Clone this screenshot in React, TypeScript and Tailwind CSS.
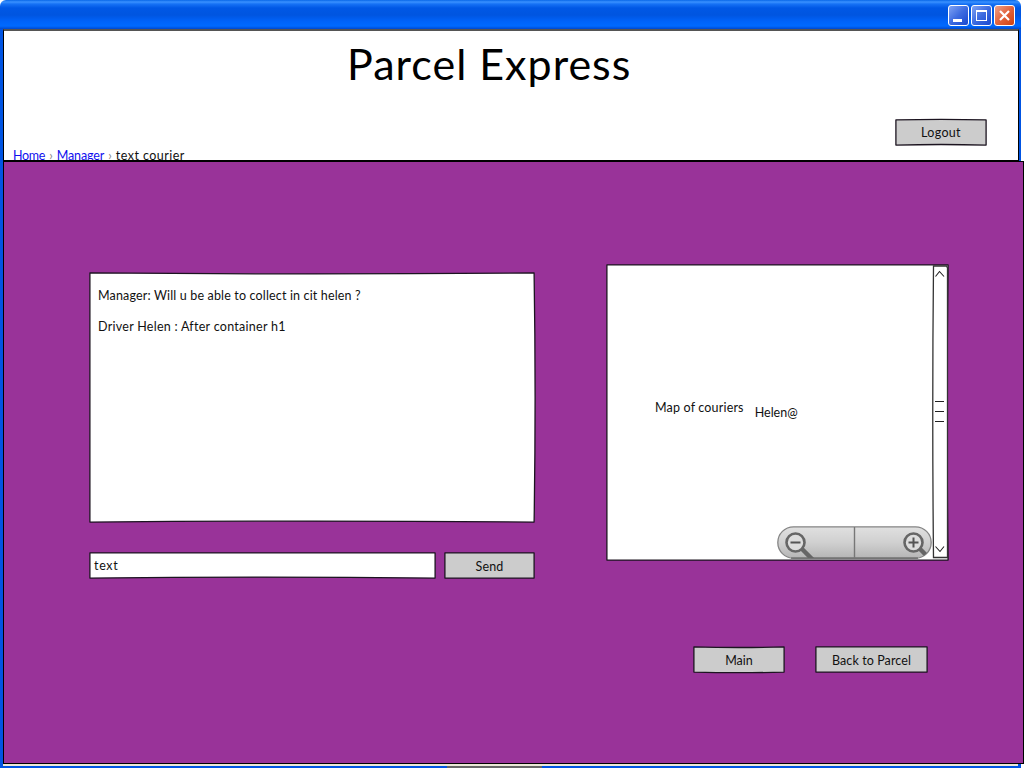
import type { ReactNode } from "react";

type OutlineProps = {
  w: number;
  h: number;
  fill: string;
  top?: number;
  right?: number;
  bottom?: number;
  left?: number;
};

// Hand-drawn rectangle whose sides bow by a pixel or two (positive = outwards).
function Outline({ w, h, fill, top = 0, right = 0, bottom = 0, left = 0 }: OutlineProps) {
  const r = w - 0.9;
  const b = h - 0.9;
  const d = `M0.9 0.9 Q${w / 2} ${0.9 - top * 2} ${r} 0.9 Q${r + right * 2} ${h / 2} ${r} ${b} Q${w / 2} ${b + bottom * 2} 0.9 ${b} Q${0.9 - left * 2} ${h / 2} 0.9 0.9Z`;
  return (
    <svg className="pointer-events-none absolute inset-0 overflow-visible" width={w} height={h} aria-hidden="true">
      <path d={d} fill={fill} stroke="#1c1420" strokeWidth="1.3" strokeLinejoin="round" />
    </svg>
  );
}

function SketchButton({ w, bow = 0, children }: { w: number; bow?: number; children: ReactNode }) {
  return (
    <button className="relative flex h-[27px] items-center justify-center pt-px" style={{ width: w }}>
      <Outline w={w} h={27} fill="#cccccc" top={bow} bottom={-bow} />
      <span className="relative whitespace-nowrap">{children}</span>
    </button>
  );
}

function WindowButtons() {
  return (
    <svg width="68" height="22" viewBox="0 0 68 22" aria-hidden="true">
      <defs>
        <linearGradient id="blueBtn" x1="0" y1="0" x2="1" y2="1">
          <stop offset="0" stopColor="#83a6f5" />
          <stop offset="0.5" stopColor="#3d6be0" />
          <stop offset="1" stopColor="#1746cf" />
        </linearGradient>
        <linearGradient id="redBtn" x1="0" y1="0" x2="1" y2="1">
          <stop offset="0" stopColor="#f0a48c" />
          <stop offset="0.5" stopColor="#e2633d" />
          <stop offset="1" stopColor="#cf3f0c" />
        </linearGradient>
      </defs>
      <rect x="0.5" y="0.5" width="20" height="20" rx="2.5" fill="url(#blueBtn)" stroke="#fff" />
      <rect x="5" y="14" width="9" height="3" fill="#fff" />
      <rect x="23.5" y="0.5" width="20" height="20" rx="2.5" fill="url(#blueBtn)" stroke="#fff" />
      <path d="M28 5h11v11H28z M29 7v8h9V7z" fill="#fff" fillRule="evenodd" />
      <rect x="46.5" y="0.5" width="20" height="20" rx="2.5" fill="url(#redBtn)" stroke="#fff" />
      <path d="M52 6l9 9M61 6l-9 9" stroke="#fff" strokeWidth="2.2" />
    </svg>
  );
}

function Magnifier({ cx, cy, plus = false }: { cx: number; cy: number; plus?: boolean }) {
  return (
    <g transform={`translate(${cx} ${cy})`} fill="none" stroke="#666">
      <path d="M6.5 6.5L17 17" strokeWidth="4.4" />
      <circle r="9" fill="#ddd" strokeWidth="2.6" />
      <path d="M-5 0H5" stroke="#555" strokeWidth="2" />
      {plus && <path d="M0 -5V5" stroke="#555" strokeWidth="2" />}
    </g>
  );
}

function ZoomControl() {
  return (
    <svg width="155" height="34" viewBox="0 0 155 34" aria-hidden="true">
      <defs>
        <linearGradient id="zoomFill" x1="0" y1="0" x2="0" y2="1">
          <stop offset="0" stopColor="#e0e0e0" />
          <stop offset="0.5" stopColor="#d0d0d0" />
          <stop offset="1" stopColor="#b5b5b5" />
        </linearGradient>
        <clipPath id="zoomClip">
          <rect x="1" y="1" width="153" height="31" rx="15.5" />
        </clipPath>
      </defs>
      <rect x="0.8" y="0.8" width="153.4" height="31.4" rx="15.7" fill="url(#zoomFill)" stroke="#858585" strokeWidth="1.3" />
      <path d="M14 32.2H141" stroke="#666" strokeWidth="1.2" />
      <path d="M77.5 1V32" stroke="#777" strokeWidth="1.4" />
      <g clipPath="url(#zoomClip)">
        <Magnifier cx={18.5} cy={16.5} />
        <Magnifier cx={136.5} cy={16.5} plus />
      </g>
    </svg>
  );
}

function ScrollBar() {
  return (
    <svg width="17" height="294" viewBox="0 0 17 294" aria-hidden="true">
      <path d="M1.5 1H14.5L15.500 3Q15.200 147 15.500 292.500H1.500Q0 147 1.500 1Z" fill="#fff" stroke="#333" strokeWidth="1.3" />
      <path d="M3.500 11.500L7.500 6.500L12 11.500M3.500 281.500L8 286.500L12 281.500" fill="none" stroke="#222" strokeWidth="1.1" />
      <path d="M3 136.500H12M3 146.500H12M3 156.500H12" stroke="#222" strokeWidth="1.2" />
    </svg>
  );
}

export default function App() {
  return (
    <div className="flex h-[768px] w-[1024px] flex-col overflow-hidden bg-white font-['Comic_Sans_MS','Lato',sans-serif] text-[12.500px] leading-[15.500px] text-[#111]">
      <div className="flex h-[29px] w-[1021px] shrink-0 justify-end rounded-t-[6px] bg-[linear-gradient(180deg,#0867e8_0px,#3a91ff_2px,#1672f5_4px,#0058e5_8px,#0055e0_15px,#0062f8_21px,#006aff_26px,#0048cf_29px)] pt-[5px] pr-[5px]">
        <WindowButtons />
      </div>
      <div className="flex min-h-0 flex-1 bg-[linear-gradient(90deg,#0054e3_1021px,white_1021px)] pl-[3px]">
        <div className="flex w-[1021px] flex-col">
          <header className="flex h-[132px] w-[1016px] flex-col overflow-hidden border-t-2 border-r border-b border-l border-t-[#555] border-r-black border-b-black border-l-black bg-white">
            <h1 className="h-[88px] shrink-0 pt-[8px] pl-[343px] text-[43px] leading-[50px] tracking-[1px] whitespace-nowrap text-black">Parcel Express</h1>
            <div className="flex h-[29px] shrink-0 justify-end pr-[31px]">
              <SketchButton w={92} bow={0.6}>
                <span className="tracking-[0.300px]">Logout</span>
              </SketchButton>
            </div>
            <nav className="flex h-[15px] shrink-0 gap-[4px] pl-[9px] whitespace-nowrap">
              <a className="tracking-[-0.300px] text-[#1010ee] underline">Home</a>
              <span className="text-[#888]">›</span>
              <a className="tracking-[-0.100px] text-[#1010ee] underline">Manager</a>
              <span className="text-[#888]">›</span>
              <span className="tracking-[0.450px]">text courier</span>
            </nav>
          </header>
          <main className="flex h-[603px] shrink-0 flex-col border border-black bg-[#993399]">
            <div className="flex h-[484px] pl-[85px]">
              <section className="flex w-[446px] flex-col pt-[110px]">
                <div className="relative h-[251px] w-[446px]">
                  <Outline w={446} h={251} fill="#fff" top={-1} right={1} bottom={-1} />
                  <div className="relative flex flex-col gap-[15.500px] pt-[16px] pl-[9px] whitespace-nowrap">
                    <p className="tracking-[0.160px]">Manager: Will u be able to collect in cit helen ?</p>
                    <p className="tracking-[0.270px]">Driver Helen : After container h1</p>
                  </div>
                </div>
                <div className="mt-[29px] flex gap-[8px]">
                  <div className="relative h-[27px] w-[347px]">
                    <Outline w={347} h={27} fill="#fff" bottom={-1} />
                    <span className="relative block pt-[6px] pl-[5px] tracking-[0.700px]">text</span>
                  </div>
                  <SketchButton w={91}>
                    <span className="block pt-px tracking-[0.200px]">Send</span>
                  </SketchButton>
                </div>
              </section>
              <section className="ml-[71px] pt-[102px]">
                <div className="relative flex h-[297px] w-[343px]">
                  <Outline w={343} h={297} fill="#fff" right={-1} />
                  <div className="relative flex w-[327px] flex-col">
                    <div className="flex h-[262px] gap-[11px] pt-[136px] pl-[49px] whitespace-nowrap">
                      <span className="tracking-[0.170px]">Map of couriers</span>
                      <span className="pt-[5px] tracking-normal">Helen@</span>
                    </div>
                    <div className="pl-[171px]">
                      <ZoomControl />
                    </div>
                  </div>
                  <div className="relative pt-px">
                    <ScrollBar />
                  </div>
                </div>
              </section>
            </div>
            <div className="flex gap-[30px] pl-[689px]">
              <SketchButton w={92} bow={-0.6}>
                <span className="block pt-px">Main</span>
              </SketchButton>
              <SketchButton w={113}>
                <span className="block pt-px tracking-[0.100px]">Back to Parcel</span>
              </SketchButton>
            </div>
          </main>
          <div className="h-[2px] w-[1015px] shrink-0 bg-[#ece9d8]" />
          <div className="ml-[444px] h-[2px] w-[95px] shrink-0 bg-[#666]" />
        </div>
      </div>
    </div>
  );
}
